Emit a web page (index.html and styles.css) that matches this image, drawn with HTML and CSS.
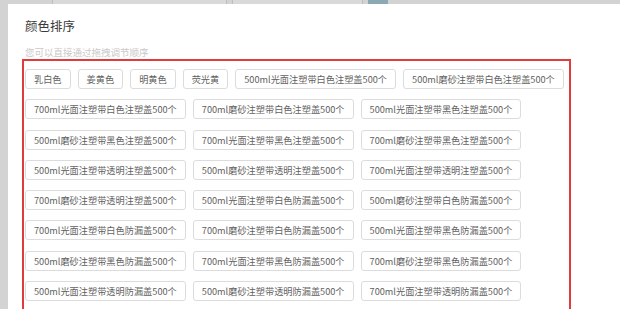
FILE: index.html
```html
<!DOCTYPE html>
<html lang="zh-CN">

<head>
    <meta charset="UTF-8">
    <meta name="viewport" content="width=device-width, initial-scale=1.0">
    <title>颜色排序</title>
    <link rel="stylesheet" href="styles.css">
</head>

<body>

    <div class="backdrop">
        <div class="ghost ghost-wide"></div>
        <div class="ghost ghost-mid"></div>
        <div class="ghost-thumb"></div>
    </div>

    <div class="panel">
        <h2 class="title">颜色排序</h2>
        <p class="hint">您可以直接通过拖拽调节顺序</p>

        <div class="sortBox">
            <span class="tag">乳白色</span>
            <span class="tag">姜黄色</span>
            <span class="tag">明黄色</span>
            <span class="tag">荧光黄</span>
            <span class="tag">500ml光面注塑带白色注塑盖500个</span>
            <span class="tag">500ml磨砂注塑带白色注塑盖500个</span>

            <span class="tag">700ml光面注塑带白色注塑盖500个</span>
            <span class="tag">700ml磨砂注塑带白色注塑盖500个</span>
            <span class="tag">500ml光面注塑带黑色注塑盖500个</span>

            <span class="tag">500ml磨砂注塑带黑色注塑盖500个</span>
            <span class="tag">700ml光面注塑带黑色注塑盖500个</span>
            <span class="tag">700ml磨砂注塑带黑色注塑盖500个</span>

            <span class="tag">500ml光面注塑带透明注塑盖500个</span>
            <span class="tag">500ml磨砂注塑带透明注塑盖500个</span>
            <span class="tag">700ml光面注塑带透明注塑盖500个</span>

            <span class="tag">700ml磨砂注塑带透明注塑盖500个</span>
            <span class="tag">500ml光面注塑带白色防漏盖500个</span>
            <span class="tag">500ml磨砂注塑带白色防漏盖500个</span>

            <span class="tag">700ml光面注塑带白色防漏盖500个</span>
            <span class="tag">700ml磨砂注塑带白色防漏盖500个</span>
            <span class="tag">500ml光面注塑带黑色防漏盖500个</span>

            <span class="tag">500ml磨砂注塑带黑色防漏盖500个</span>
            <span class="tag">700ml光面注塑带黑色防漏盖500个</span>
            <span class="tag">700ml磨砂注塑带黑色防漏盖500个</span>

            <span class="tag">500ml光面注塑带透明防漏盖500个</span>
            <span class="tag">500ml磨砂注塑带透明防漏盖500个</span>
            <span class="tag">700ml光面注塑带透明防漏盖500个</span>
        </div>
    </div>

</body>

</html>
```

FILE: styles.css
```css
html {
    font-family: "Noto Sans CJK SC", "Noto Sans", sans-serif;
}

body {
    margin: 0;
    height: 309px;
    overflow: hidden;
    background-color: #d3d3d3;
    padding-left: 8px;
}

.backdrop {
    display: flex;
    height: 4px;
    overflow: hidden;
    padding-left: 44px;
    gap: 5px;
}

.ghost {
    height: 12px;
    margin-top: -4px;
    border: 1px solid #bdbdbd;
    background-color: #d9d9d9;
}

.ghost-wide {
    width: 173px;
}

.ghost-mid {
    width: 129px;
}

.ghost-thumb {
    width: 20px;
    height: 4px;
    background-color: #8aa9b3;
}

.panel {
    background-color: white;
    height: 100%;
    padding: 14px 50px 0 14px;
}

.title {
    margin: 0;
    padding-left: 3px;
    font-size: 12.5px;
    line-height: 16px;
    font-weight: normal;
    color: #3a3a3a;
}

.hint {
    margin: 12px 0 1px 0;
    padding-left: 3px;
    font-size: 9.5px;
    line-height: 12px;
    color: #c9c9c9;
}

.sortBox {
    display: flex;
    flex-wrap: wrap;
    align-content: flex-start;
    gap: 10.3px 7px;
    width: 544px;
    height: 400px;
    padding: 8px 0 0 1px;
    border: 2px solid #e23b3b;
}

.tag {
    height: 18px;
    line-height: 18px;
    padding: 0 8px;
    border: 1px solid #dcdcdc;
    border-radius: 3px;
    font-size: 9.2px;
    color: #5f5f5f;
    white-space: nowrap;
}
```
